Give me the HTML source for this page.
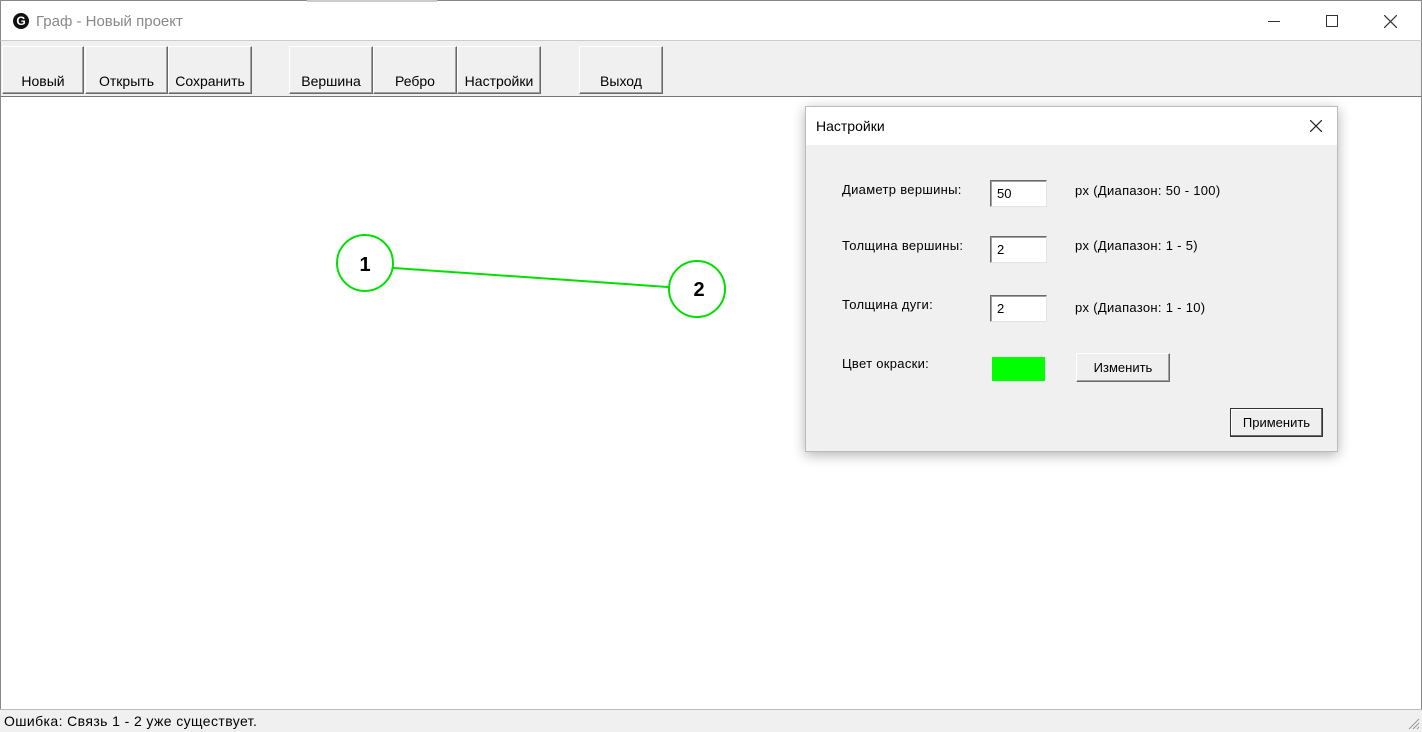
<!DOCTYPE html><html><head><meta charset="utf-8"><style>
body{margin:0;width:1422px;height:732px;position:relative;overflow:hidden;background:#fff;font-family:"Liberation Sans",sans-serif;}
.a{position:absolute;box-sizing:border-box}
.btn{position:absolute;top:46px;height:48px;background:#f0f0f0;border:1px solid;border-color:#fff #696969 #696969 #fff;box-shadow:inset -1px -1px 0 #a0a0a0;font-size:14px;text-align:center;padding-top:26px;box-sizing:border-box;color:#000}
.lbl{position:absolute;font-size:13px;color:#000;letter-spacing:0.3px}
.inp{position:absolute;width:57px;height:27px;background:#fff;border:1px solid;border-color:#6b6b6b #e3e3e3 #e3e3e3 #6b6b6b;box-shadow:inset 1px 1px 0 #a0a0a0;box-sizing:border-box;font-size:13px;padding:5px 0 0 6px}
</style></head><body>
<div class="a" style="left:0;top:0;width:1422px;height:41px;background:#fff;border:1px solid #888;border-bottom:1px solid #ccc"></div>
<div class="a" style="left:307px;top:0;width:130px;height:2px;background:#ccc"></div>
<div class="a" style="left:13px;top:13px;width:16px;height:16px;border-radius:50%;background:#111;color:#fff;font-size:12px;font-weight:bold;text-align:center;line-height:16px">G</div>
<div class="a" style="left:36px;top:13px;font-size:15px;color:#888">Граф - Новый проект</div>
<div class="a" style="left:1268px;top:21px;width:12px;height:1px;background:#333"></div>
<div class="a" style="left:1326px;top:15px;width:12px;height:12px;border:1px solid #333"></div>
<svg class="a" style="left:1384px;top:15px" width="13" height="13"><path d="M0 0L13 13M13 0L0 13" stroke="#333" stroke-width="1.2"/></svg>
<div class="a" style="left:0;top:41px;width:1422px;height:56px;background:#f0f0f0;border-left:1px solid #888;border-right:1px solid #888;border-bottom:1px solid #777"></div>
<div class="btn" style="left:2px;width:82px">Новый</div>
<div class="btn" style="left:85px;width:83px">Открыть</div>
<div class="btn" style="left:168px;width:84px">Сохранить</div>
<div class="btn" style="left:289px;width:84px">Вершина</div>
<div class="btn" style="left:373px;width:84px">Ребро</div>
<div class="btn" style="left:457px;width:84px">Настройки</div>
<div class="btn" style="left:579px;width:84px">Выход</div>
<div class="a" style="left:0;top:97px;width:1px;height:612px;background:#888"></div>
<div class="a" style="left:1421px;top:97px;width:1px;height:612px;background:#888"></div>
<svg class="a" style="left:0;top:0" width="1422" height="732">
<line x1="365" y1="266" x2="697" y2="289" stroke="#00e000" stroke-width="2"/>
<circle cx="365" cy="263" r="28" fill="#fff" stroke="#00e000" stroke-width="2"/>
<circle cx="697" cy="289" r="28" fill="#fff" stroke="#00e000" stroke-width="2"/>
<text x="365" y="271" font-size="20" font-weight="bold" text-anchor="middle" font-family="Liberation Sans">1</text>
<text x="699" y="296" font-size="20" font-weight="bold" text-anchor="middle" font-family="Liberation Sans">2</text>
</svg>
<div class="a" style="left:0;top:709px;width:1422px;height:23px;background:#f0f0f0;border-top:1px solid #bbb;font-size:14px;padding:3px 0 0 4px;letter-spacing:0.4px">Ошибка: Связь 1 - 2 уже существует.</div>
<svg class="a" style="left:1406px;top:716px" width="14" height="14"><path d="M13 3L3 13M13 7L7 13M13 11L11 13" stroke="#999" stroke-width="1"/></svg>
<div class="a" style="left:805px;top:106px;width:533px;height:346px;background:#f0f0f0;border:1px solid #bbb;box-shadow:0 3px 12px rgba(0,0,0,.3)"></div>
<div class="a" style="left:806px;top:107px;width:531px;height:38px;background:#fff"></div>
<div class="lbl" style="left:816px;top:118px;font-size:14px;letter-spacing:0">Настройки</div>
<svg class="a" style="left:1310px;top:120px" width="12" height="12"><path d="M0 0L12 12M12 0L0 12" stroke="#222" stroke-width="1.2"/></svg>
<div class="lbl" style="left:842px;top:182px">Диаметр вершины:</div>
<div class="inp" style="left:990px;top:180px">50</div>
<div class="lbl" style="left:1075px;top:183px">px (Диапазон: 50 - 100)</div>
<div class="lbl" style="left:842px;top:238px">Толщина вершины:</div>
<div class="inp" style="left:990px;top:236px">2</div>
<div class="lbl" style="left:1075px;top:238px">px (Диапазон: 1 - 5)</div>
<div class="lbl" style="left:842px;top:297px">Толщина дуги:</div>
<div class="inp" style="left:990px;top:295px">2</div>
<div class="lbl" style="left:1075px;top:300px">px (Диапазон: 1 - 10)</div>
<div class="lbl" style="left:842px;top:356px">Цвет окраски:</div>
<div class="a" style="left:992px;top:357px;width:53px;height:24px;background:#0f0"></div>
<div class="a" style="left:1076px;top:353px;width:94px;height:29px;background:#efefef;border:1px solid;border-color:#fff #696969 #696969 #fff;box-shadow:inset -1px -1px 0 #a0a0a0;font-size:13px;text-align:center;padding-top:6px">Изменить</div>
<div class="a" style="left:1230px;top:408px;width:93px;height:29px;background:#efefef;border:1px solid #333;box-shadow:inset -1px -1px 0 #696969,inset 1px 1px 0 #fff;font-size:13px;text-align:center;padding-top:6px">Применить</div>
</body></html>
